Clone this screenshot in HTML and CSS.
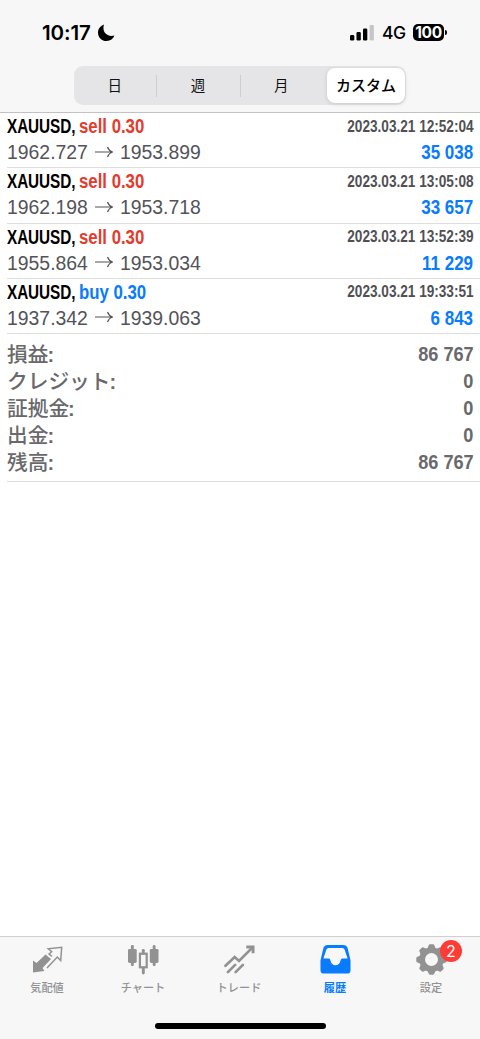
FILE: index.html
```html
<!DOCTYPE html>
<html lang="ja">
<head>
<meta charset="utf-8">
<title>履歴</title>
<link rel="stylesheet" href="styles.css">
</head>
<body>
<div class="app">
  <header class="top">
    <div class="status">
      <div class="clock"><span class="time">10:17</span>
        <svg class="moon" width="17" height="18" viewBox="0 0 17 18"><path d="M6 .5C1.800 2 0 5.500 0 8.700 0 13.500 3.800 17 8.600 17c3.800 0 6.700-2 7.800-5.400C9.500 13.500 3.500 8 6 .5Z"/></svg>
      </div>
      <div class="signals">
        <svg width="25" height="16" viewBox="0 0 25 16"><rect x="0" y="10" width="4.300" height="5.500" rx="1.300"/><rect x="6.500" y="7" width="4.300" height="8.500" rx="1.300"/><rect x="13" y="3.500" width="4.300" height="12" rx="1.300"/><rect x="19.600" y="0" width="4.300" height="15.500" rx="1.300" fill="#c6c6c8"/></svg>
        <span class="net">4G</span>
        <div class="battery"><span class="level">100</span></div><i class="nub"></i>
      </div>
    </div>
    <nav class="segments">
      <span class="seg">日</span><i class="bar"></i><span class="seg">週</span><i class="bar"></i><span class="seg">月</span><span class="seg on">カスタム</span>
    </nav>
  </header>
  <main>
    <section class="deal"><div class="line head"><b class="symbol">XAUUSD,</b><b class="side sell">sell 0.30</b><b class="date">2023.03.21 12:52:04</b></div><div class="line foot"><span>1962.727</span><svg class="arrow" viewBox="0 0 18 12"><path d="M0 6H17.500M12.500 1Q14 5 17.500 6Q14 7 12.500 11"/></svg><span>1953.899</span><b class="profit">35 038</b></div></section>
    <section class="deal"><div class="line head"><b class="symbol">XAUUSD,</b><b class="side sell">sell 0.30</b><b class="date">2023.03.21 13:05:08</b></div><div class="line foot"><span>1962.198</span><svg class="arrow" viewBox="0 0 18 12"><path d="M0 6H17.500M12.500 1Q14 5 17.500 6Q14 7 12.500 11"/></svg><span>1953.718</span><b class="profit">33 657</b></div></section>
    <section class="deal"><div class="line head"><b class="symbol">XAUUSD,</b><b class="side sell">sell 0.30</b><b class="date">2023.03.21 13:52:39</b></div><div class="line foot"><span>1955.864</span><svg class="arrow" viewBox="0 0 18 12"><path d="M0 6H17.500M12.500 1Q14 5 17.500 6Q14 7 12.500 11"/></svg><span>1953.034</span><b class="profit">11 229</b></div></section>
    <section class="deal"><div class="line head"><b class="symbol">XAUUSD,</b><b class="side buy">buy 0.30</b><b class="date">2023.03.21 19:33:51</b></div><div class="line foot"><span>1937.342</span><svg class="arrow" viewBox="0 0 18 12"><path d="M0 6H17.500M12.500 1Q14 5 17.500 6Q14 7 12.500 11"/></svg><span>1939.063</span><b class="profit">6 843</b></div></section>
    <section class="summary">
      <div class="total"><span>損益<i>:</i></span><b>86 767</b></div>
      <div class="total"><span>クレジット<i>:</i></span><b>0</b></div>
      <div class="total"><span>証拠金<i>:</i></span><b>0</b></div>
      <div class="total"><span>出金<i>:</i></span><b>0</b></div>
      <div class="total"><span>残高<i>:</i></span><b>86 767</b></div>
    </section>
  </main>
  <footer class="bottom">
    <nav class="tabs">
      <div class="tab"><svg viewBox="0 0 31 31"><path d="M1 15.500 4.500 18 13.500 9.500 19 14 10.500 23 12.500 26 1 27.500Z"/><path class="stroke thin" d="M20 11.300 17 9 19.700 6.700 16.300 3.700 29.700 2.300 28.700 15.500 25.300 12 15 23"/></svg><span>気配値</span></div>
      <div class="tab"><svg viewBox="0 0 32 32"><rect x="0" y="4" width="9" height="14.500" rx="1.500"/><rect x="3" y="0" width="3" height="22" rx="1.500"/><rect x="22.500" y="4" width="9" height="14.500" rx="1.500"/><rect x="25.500" y="0" width="3" height="22" rx="1.500"/><rect x="14.300" y="4" width="3" height="6" rx="1.500"/><rect x="14.300" y="23" width="3" height="7.500" rx="1.500"/><rect class="stroke" x="12.300" y="9" width="7" height="14"/></svg><span>チャート</span></div>
      <div class="tab"><svg viewBox="0 0 32 32"><path class="stroke thick" d="M1.500 21.500 11 12.500 15.500 16.500 29 3M4 28 11.500 20.500M12 28 19.500 20.500"/><path d="M23 .5H31.500V8.500H28.500V3.500H23Z"/></svg><span>トレード</span></div>
      <div class="tab active"><svg viewBox="0 0 32 32"><path fill-rule="evenodd" d="M8 0H24Q27.500 0 28.500 3L31.500 16V26Q31.500 29.500 28 29.500H4Q.5 29.500 .5 26V16L3.500 3Q4.500 0 8 0ZM9 3Q7 3 6.500 5L3.500 14H9Q10.500 14 10.800 16C11.500 22.500 20.500 22.500 21.200 16Q21.500 14 23 14H28.500L25.500 5Q25 3 23 3Z"/></svg><span>履歴</span></div>
      <div class="tab"><svg viewBox="0 0 32 32"><g transform="translate(16 15)"><circle r="9.700" fill="none" stroke="currentColor" stroke-width="6"/><path id="tooth" d="M-4.500-10.500-3-14.500Q-2.700-15.700-1.500-15.700H1.500Q2.700-15.700 3-14.500L4.500-10.500Z"/><use href="#tooth" transform="rotate(45)"/><use href="#tooth" transform="rotate(90)"/><use href="#tooth" transform="rotate(135)"/><use href="#tooth" transform="rotate(180)"/><use href="#tooth" transform="rotate(225)"/><use href="#tooth" transform="rotate(270)"/><use href="#tooth" transform="rotate(315)"/></g></svg><span>設定</span><em class="badge">2</em></div>
    </nav>
    <div class="home"></div>
  </footer>
</div>
</body>
</html>
```
FILE: styles.css
```css
* { box-sizing: border-box; }
body { margin: 0; background: #fff; font-family: "Liberation Sans", "Noto Sans CJK JP", sans-serif; }
.app { width: 480px; height: 1039px; display: flex; flex-direction: column; overflow: hidden; }
svg { display: block; flex: none; }
.top { height: 113px; flex: none; background: #f7f7f7; border-bottom: 1px solid #c2c2c4; }
.status { height: 66px; padding: 22px 33px 0 42px; display: flex; justify-content: space-between; }
.clock, .signals { display: flex; align-items: center; height: 21px; }
.clock { gap: 6px; }
.time { font: 600 20.5px/21px Inter, sans-serif; letter-spacing: -.1px; width: 50px; white-space: nowrap; }
.net { font: 500 17.500px/21px Inter, sans-serif; margin-left: 7px; width: 24px; letter-spacing: -.5px; }
.battery { margin-left: 7px; width: 31px; height: 17px; border-radius: 5px; background: #000; color: #fff; text-align: center; }
.level { display: block; font: 700 15.500px/17px Inter, sans-serif; letter-spacing: -.4px; }
.nub { width: 2px; height: 5px; border-radius: 0 2px 2px 0; background: #000; margin-left: 1px; }
.segments { width: 332px; height: 39px; margin-left: 74px; padding: 2px 1px 2px 0; border-radius: 9px; background: #e5e5e7; display: flex; align-items: center; }
.seg { flex: 1; text-align: center; font: 400 14.500px/33px "Noto Sans CJK JP", sans-serif; height: 35px; color: #111; padding-right: 1px; }
.seg.on { flex: 0 0 78px; margin-left: 4px; background: #fff; border-radius: 8px; font-weight: 500; font-size: 15px; color: #000; box-shadow: 0 1px 4px #0002; white-space: nowrap; padding: 0; }
.bar { width: 1px; height: 22px; background: #cdcdd0; }
.deal { height: 55.250px; margin-left: 7px; padding-right: 6.500px; border-bottom: 1px solid #dedee1; }
.line { display: flex; align-items: center; white-space: nowrap; }
.head { height: 27px; }
.foot { height: 25px; font-size: 19.400px; color: #535359; }
.symbol { width: 72px; font-size: 19.500px; transform: scaleX(.785); transform-origin: left; letter-spacing: -.1px; }
.side { font-size: 19.500px; transform: scaleX(.86); transform-origin: left; }
.sell { color: #e33c2e; }
.buy, .profit { color: #087bff; }
.date { margin-left: auto; font-size: 16px; color: #505054; transform: scaleX(.85); transform-origin: right; }
.arrow { width: 18px; height: 12px; margin: -2px 7px 0 7px; fill: none; stroke: #535359; stroke-width: 1.200; }
.profit { margin-left: auto; font-size: 20px; transform: scaleX(.85); transform-origin: right; }
.summary { margin-left: 7px; padding: 6px 6.500px 0 0; height: 148px; border-bottom: 1px solid #dedee1; color: #69696b; }
.total { height: 27.100px; display: flex; justify-content: space-between; align-items: center; line-height: 27px; }
.total span { font-family: "Noto Sans CJK JP", sans-serif; font-weight: 500; font-size: 20.700px; }
.total i { font: 700 20px/20px "Liberation Sans", sans-serif; margin-left: -1px; }
.total b { font-size: 20.500px; transform: scaleX(.885); transform-origin: right; }
.bottom { margin-top: auto; height: 103px; background: #f7f7f7; border-top: 1px solid #d0d0d2; }
.tabs { display: flex; height: 85px; margin-left: -1px; margin-right: 1px; }
.tab { position: relative; flex: 1; padding-top: 8px; display: flex; flex-direction: column; align-items: center; color: #929292; }
.tab svg { width: 31px; height: 31px; fill: currentColor; overflow: visible; }
.tab span { margin-top: 2px; font: 500 11.200px/18px "Noto Sans CJK JP", sans-serif; }
.tab.active { color: #087bff; }
.tab.active span { font-weight: 700; }
.tab .stroke { fill: none; stroke: currentColor; stroke-width: 2.300; }
.tab .thin { stroke-width: 1.500; }
.tab .thick { stroke-width: 2.800; stroke-linecap: round; }
.badge { position: absolute; left: 57px; top: 3px; width: 22px; height: 22px; border-radius: 50%; background: #ff3b35; color: #fff; font: 400 16px/22px Inter, sans-serif; text-align: center; }
.home { width: 171px; height: 6px; margin: 1px auto 0; border-radius: 3px; background: #000; }
```
